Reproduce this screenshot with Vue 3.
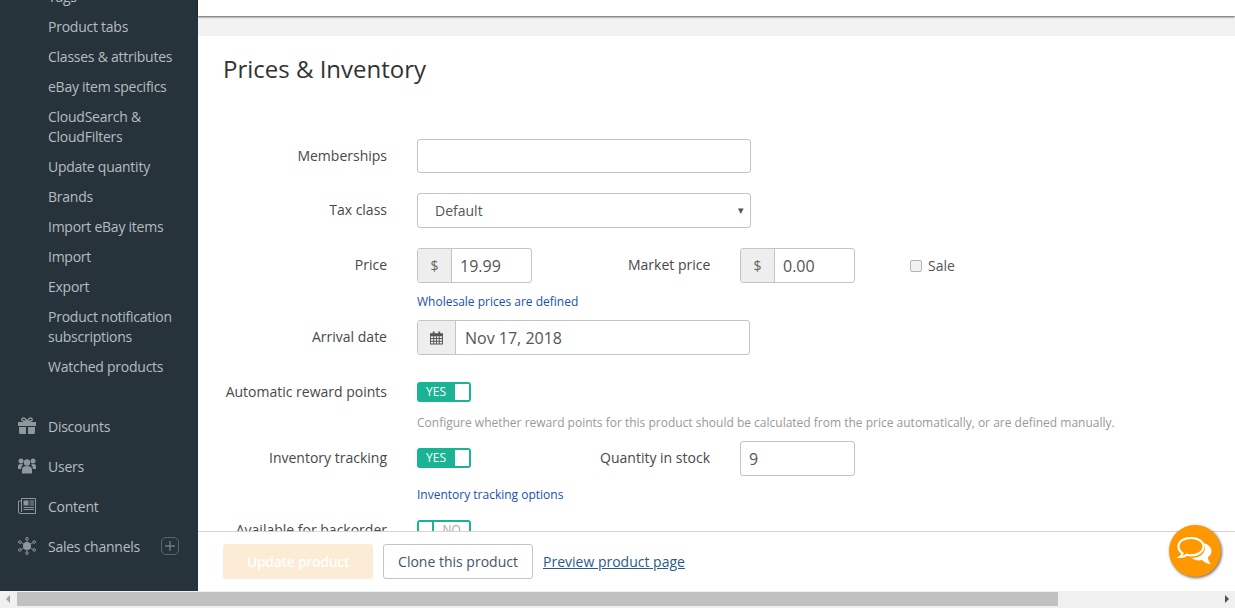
<script setup>
const subItems = [
  'Tags',
  'Product tabs',
  'Classes & attributes',
  'eBay item specifics',
  'CloudSearch & CloudFilters',
  'Update quantity',
  'Brands',
  'Import eBay items',
  'Import',
  'Export',
  'Product notification subscriptions',
  'Watched products'
]
</script>

<template>
  <div class="page">
    <div class="body-row">
      <aside class="sidebar">
        <ul class="sub-menu">
          <li v-for="item in subItems" :key="item">{{ item }}</li>
        </ul>
        <ul class="main-menu">
          <li>
            <svg class="nav-icon" viewBox="0 0 18 18">
              <path d="M0 5h18v4H0zM1 10h7v7H2.500A1.500 1.500 0 0 1 1 15.500zM10 10h7v5.500a1.500 1.500 0 0 1-1.500 1.500H10z" fill="#8e979c" />
              <path d="M9 4.500C7.500 1 4.500 0 3.800 2c-.7 1.800 3 2.700 5.200 2.500 2.200.2 5.900-.7 5.200-2.500C13.500 0 10.500 1 9 4.500z" fill="none" stroke="#8e979c" stroke-width="1.400" />
            </svg>
            <span>Discounts</span>
          </li>
          <li>
            <svg class="nav-icon" viewBox="0 0 18 18">
              <circle cx="9" cy="5.500" r="3.200" fill="#8e979c" />
              <circle cx="3" cy="4" r="2.500" fill="#8e979c" />
              <circle cx="15" cy="4" r="2.500" fill="#8e979c" />
              <path d="M4 16.500v-4C4 10 6 9 9 9s5 1 5 3.500v4z" fill="#8e979c" />
              <path d="M0 12V9.300C0 7.800 1 7 3 7c.9 0 1.500.2 2 .6C3.800 8.800 3.200 10 3.200 12zM18 12V9.300c0-1.500-1-2.300-3-2.300-.9 0-1.500.2-2 .6 1.200 1.200 1.800 2.400 1.800 4.400z" fill="#8e979c" />
            </svg>
            <span>Users</span>
          </li>
          <li>
            <svg class="nav-icon" viewBox="0 0 18 18">
              <path d="M3.500 1.500h14v15H2A1.500 1.500 0 0 1 .5 15V4h3z" fill="none" stroke="#8e979c" />
              <path d="M3.500 4v11" stroke="#8e979c" fill="none" />
              <path d="M5.500 3.500h5v5h-5zM11.500 3.500h4.500v1h-4.500zM11.500 5.500h4.500v1h-4.500zM11.500 7.500h4.500v1h-4.500zM5.500 10h10.500v1H5.500zM5.500 12h10.500v1H5.500z" fill="#8e979c" />
            </svg>
            <span>Content</span>
          </li>
          <li>
            <svg class="nav-icon" viewBox="0 0 18 18">
              <path d="M9 9L2 5M9 9l7-4M9 9l-7 4M9 9l7 4M9 9V2M9 9v7" stroke="#8e979c" stroke-width=".8" />
              <circle cx="9" cy="9" r="4" fill="#8e979c" />
              <circle cx="9" cy="1.800" r="1.300" fill="#27333a" stroke="#8e979c" />
              <circle cx="9" cy="16.200" r="1.300" fill="#27333a" stroke="#8e979c" />
              <circle cx="1.800" cy="5" r="1.300" fill="#27333a" stroke="#8e979c" />
              <circle cx="16.200" cy="5" r="1.300" fill="#27333a" stroke="#8e979c" />
              <circle cx="1.800" cy="13" r="1.300" fill="#27333a" stroke="#8e979c" />
              <circle cx="16.200" cy="13" r="1.300" fill="#27333a" stroke="#8e979c" />
            </svg>
            <span>Sales channels</span>
            <span class="plus-box">
              <svg viewBox="0 0 10 10" width="10" height="10">
                <path d="M5 0v10M0 5h10" stroke="#6f797f" stroke-width="1.400" />
              </svg>
            </span>
          </li>
        </ul>
      </aside>

      <main class="main">
        <div class="top-bar" />
        <div class="gap-band" />
        <div class="scroller">
          <h1 class="title">Prices &amp; Inventory</h1>

          <div class="row row-memberships">
            <label class="lbl">Memberships</label>
            <input class="input wide" type="text" />
          </div>

          <div class="row row-tax">
            <label class="lbl">Tax class</label>
            <div class="select wide">
              <span>Default</span>
              <span class="caret">▾</span>
            </div>
          </div>

          <div class="row row-price">
            <label class="lbl">Price</label>
            <div class="group price-group">
              <span class="addon">$</span>
              <span class="value">19.99</span>
            </div>
            <label class="lbl-inline market">Market price</label>
            <div class="group market-group">
              <span class="addon">$</span>
              <span class="value">0.00</span>
            </div>
            <label class="sale">
              <span class="checkbox" />
              <span>Sale</span>
            </label>
          </div>

          <div class="link-row wholesale"><a class="small-link">Wholesale prices are defined</a></div>

          <div class="row row-date">
            <label class="lbl">Arrival date</label>
            <div class="group date-group">
              <span class="addon date-addon">
                <svg viewBox="0 0 14 14" width="13" height="14">
                  <path d="M3 0h2v2.500H3zM9 0h2v2.500H9z" fill="#555" />
                  <path fill-rule="evenodd" d="M0 2h14v12H0zM1 5v2h2.500V5zm3.500 0v2H6.500V5zm3 0v2h2V5zm3 0v2H13V5zM1 8v2h2.500V8zm3.500 0v2H6.500V8zm3 0v2h2V8zm3 0v2H13V8zM1 11v2h2.500v-2zm3.500 0v2H6.500v-2zm3 0v2h2v-2zm3 0v2H13v-2z" fill="#555" />
                </svg>
              </span>
              <span class="value date-value">Nov 17, 2018</span>
            </div>
          </div>

          <div class="row row-reward">
            <label class="lbl">Automatic reward points</label>
            <div class="toggle on"><span class="toggle-text">YES</span><span class="knob" /></div>
          </div>
          <p class="help">Configure whether reward points for this product should be calculated from the price automatically, or are defined manually.</p>

          <div class="row row-inventory">
            <label class="lbl">Inventory tracking</label>
            <div class="toggle on"><span class="toggle-text">YES</span><span class="knob" /></div>
            <label class="lbl-inline quantity">Quantity in stock</label>
            <div class="group qty-group"><span class="value">9</span></div>
          </div>

          <div class="link-row options"><a class="small-link">Inventory tracking options</a></div>

          <div class="row row-backorder">
            <label class="lbl">Available for backorder</label>
            <div class="toggle off"><span class="knob" /><span class="toggle-text">NO</span></div>
          </div>
        </div>

        <footer class="footer">
          <button class="btn-update">Update product</button>
          <button class="btn-clone">Clone this product</button>
          <a class="preview">Preview product page</a>
        </footer>

        <div class="chat">
          <svg viewBox="0 0 36 30" width="36" height="30">
            <path d="M26 7C31 8 34.500 11 34.500 15c0 3-1.500 5-3.500 6 0 3 1 5 3 7-4 0-7-2-9-4-4 1-8 0-10-2 7 0 13-4 13-10 0-2-1-4-2-5z" fill="#fff" />
            <path d="M14 2C7.500 2 1.500 5 1.500 10.500c0 3 1.800 5.300 4 6.800 0 1.500-.8 2.700-2.500 3.700 2.800 0 5-.8 6.800-2.200 1.400.4 2.900.6 4.200.6 6.500 0 12.500-3.500 12.500-8.900S20.500 2 14 2z" fill="#ff9800" stroke="#fff" stroke-width="2.200" />
          </svg>
        </div>
      </main>
    </div>

    <div class="hscroll">
      <span class="arrow left" />
      <div class="thumb" />
      <span class="arrow right" />
    </div>
  </div>
</template>

<style>
html, body { margin: 0; overflow: hidden; }
</style>

<style scoped>
.page {
  width: 1235px;
  height: 608px;
  display: flex;
  flex-direction: column;
  overflow: hidden;
  font-family: "Open Sans", "Liberation Sans", sans-serif;
  font-size: 14px;
  color: #456;
}

.body-row {
  display: flex;
  height: 591px;
}

/* sidebar */
.sidebar {
  width: 198px;
  flex: none;
  height: 591px;
  overflow: hidden;
  background: #27333a;
  color: #b4bdc2;
  letter-spacing: -0.25px;
}

.sub-menu, .main-menu {
  list-style: none;
  margin: 0;
  padding: 0;
}

.sub-menu {
  margin-top: -18px;
  padding-left: 48px;
  padding-right: 20px;
}

.sub-menu li {
  padding: 5px 0;
  line-height: 20px;
}

.main-menu {
  margin-top: 24px;
}

.main-menu li {
  display: flex;
  align-items: center;
  height: 40px;
  padding-left: 18px;
}

.nav-icon {
  width: 18px;
  height: 18px;
  margin-right: 12px;
  flex: none;
}

.plus-box {
  width: 16px;
  height: 16px;
  margin-left: 21px;
  border: 1px solid #5a656b;
  border-radius: 5px;
  display: flex;
  align-items: center;
  justify-content: center;
}

/* main */
.main {
  position: relative;
  flex: 1;
  min-width: 0;
  display: flex;
  flex-direction: column;
  background: #fff;
}

.top-bar {
  position: relative;
  height: 16px;
  flex: none;
  background: #fff;
  box-shadow: 0 1px 2px rgba(0, 0, 0, 0.65);
}

.gap-band {
  height: 20px;
  flex: none;
  background: #f2f2f2;
}

.scroller {
  height: 496px;
  flex: none;
  overflow: hidden;
  padding-left: 25px;
  box-sizing: border-box;
  border-bottom: 1px solid #d4d4d4;
  color: #444;
}

.title {
  margin: 16px 0 0;
  font-size: 24px;
  font-weight: 400;
  line-height: 34px;
  color: #333;
}

.row {
  display: flex;
  align-items: flex-start;
}

.lbl {
  width: 164px;
  flex: none;
  margin-right: 30px;
  text-align: right;
  line-height: 34px;
  white-space: nowrap;
  color: #484848;
}

.row-memberships { margin-top: 53px; }
.row-tax { margin-top: 20px; }
.row-price { margin-top: 20px; }
.row-date { margin-top: 11px; }
.row-reward { margin-top: 20px; height: 34px; }
.row-inventory { margin-top: 10px; height: 35px; }
.row-backorder { margin-top: 11px; }

.input, .select {
  box-sizing: border-box;
  height: 35px;
  border: 1px solid #c4c4c4;
  border-radius: 3px;
  background: #fff;
  outline: none;
}

.input { height: 34px; }

.wide { width: 334px; }

.select {
  display: flex;
  align-items: center;
  justify-content: space-between;
  padding: 0 6px 0 17px;
  color: #555;
}

.caret {
  font-size: 11px;
  color: #555;
  line-height: 1;
  margin-bottom: 3px;
}

.group {
  box-sizing: border-box;
  height: 35px;
  display: flex;
  flex: none;
  border: 1px solid #c4c4c4;
  border-radius: 3px;
  overflow: hidden;
  background: #fff;
}

.addon {
  width: 33px;
  flex: none;
  display: flex;
  align-items: center;
  justify-content: center;
  background: #eee;
  border-right: 1px solid #c4c4c4;
  color: #666;
  font-size: 14px;
}

.value {
  font-size: 16px;
  color: #555;
  line-height: 34px;
  padding-left: 8px;
}

.price-group { width: 115px; }
.market-group { width: 115px; }
.date-group { width: 333px; }
.date-addon { width: 37px; }
.date-value { padding-left: 9px; }
.qty-group { width: 115px; }

.lbl-inline {
  line-height: 34px;
  white-space: nowrap;
  color: #484848;
}

.market { margin-left: 96px; width: 112px; }
.quantity { width: 239px; text-align: right; margin-right: 30px; }

.sale {
  display: flex;
  align-items: center;
  height: 35px;
  margin-left: 55px;
  color: #555;
}

.checkbox {
  width: 10px;
  height: 10px;
  margin-right: 6px;
  border: 1px solid #b5b5b5;
  border-radius: 2px;
  background: #f1f1f1;
}

.link-row { padding-left: 194px; }
.wholesale { margin-top: 9px; height: 17px; line-height: 17px; }
.options { margin-top: 9px; height: 17px; line-height: 17px; }

.small-link {
  font-size: 12px;
  color: #1a4fae;
}

.row-reward .toggle { margin-top: 7px; }
.row-inventory .toggle { margin-top: 7px; }
.row-backorder .toggle { margin-top: 7px; }

.toggle {
  box-sizing: border-box;
  width: 54px;
  height: 20px;
  border: 2px solid #1ab394;
  border-radius: 3px;
  display: flex;
  align-items: stretch;
  font-size: 12px;
  line-height: 16px;
  flex: none;
}

.toggle.on { background: #1ab394; color: #fff; }
.toggle.off { background: #fff; color: #aaa; }

.toggle-text {
  width: 36px;
  text-align: center;
}

.toggle.on .toggle-text {
  box-sizing: border-box;
  padding-right: 2px;
}

.knob {
  width: 14px;
  background: #fff;
}

.toggle.off .knob {
  box-sizing: content-box;
  border-right: 2px solid #1ab394;
}

.help {
  margin: 5px 0 0 194px;
  font-size: 12px;
  line-height: 17px;
  color: #999;
  white-space: nowrap;
}

/* footer */
.footer {
  flex: 1;
  display: flex;
  align-items: center;
  padding-left: 25px;
  background: #fff;
}

.btn-update {
  width: 150px;
  height: 35px;
  border: 0;
  border-radius: 3px;
  background: #fcebd5;
  color: #fff;
  font: 600 14px "Open Sans", sans-serif;
  letter-spacing: -0.3px;
}

.btn-clone {
  width: 150px;
  height: 35px;
  margin-left: 10px;
  border: 1px solid #c4c4c4;
  border-radius: 3px;
  background: #fff;
  color: #456;
  font: 14px "Open Sans", sans-serif;
}

.preview {
  margin-left: 10px;
  color: #2a5a8c;
  text-decoration: underline;
}

.chat {
  position: absolute;
  left: 971px;
  top: 525px;
  width: 52px;
  height: 52px;
  border-radius: 50%;
  background: #ff9800;
  box-shadow: 1px 1px 3px rgba(0, 0, 0, 0.6);
  display: flex;
  align-items: center;
  justify-content: center;
}

/* horizontal scrollbar */
.hscroll {
  position: relative;
  height: 17px;
  background: #f0f0f0;
}

.thumb {
  position: absolute;
  left: 17px;
  top: 1px;
  width: 1041px;
  height: 14px;
  background: #c1c1c1;
}

.arrow {
  position: absolute;
  top: 4px;
  width: 0;
  height: 0;
  border-top: 4px solid transparent;
  border-bottom: 4px solid transparent;
}

.arrow.left { left: 6px; border-right: 4px solid #a3a3a3; }
.arrow.right { right: 6px; border-left: 4px solid #505050; }
</style>
